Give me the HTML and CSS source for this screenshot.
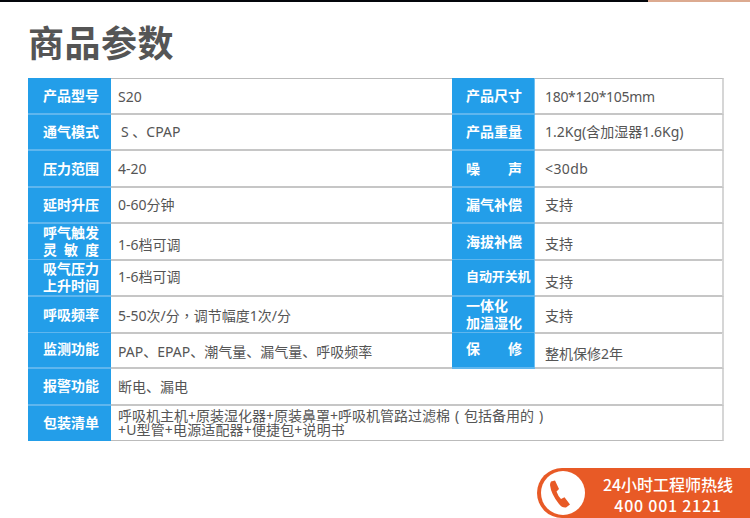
FILE: index.html
```html
<!DOCTYPE html>
<html lang="zh-CN">
<head>
<meta charset="utf-8">
<title>商品参数</title>
<link rel="stylesheet" href="styles.css">
</head>
<body>
<div class="topbar"><div class="topbar-dark"></div><div class="topbar-peach"></div></div>
<main class="page">
  <h1 class="title">商品参数</h1>
  <section class="specs">
    <div class="row h37 first">
      <div class="label">产品型号</div><div class="value">S20</div>
      <div class="label right">产品尺寸</div><div class="value right tight">180*120*105mm</div>
    </div>
    <div class="row h36">
      <div class="label up1">通气模式</div><div class="value indent up1">S 、CPAP</div>
      <div class="label right up1">产品重量</div><div class="value right up1">1.2Kg(含加湿器1.6Kg)</div>
    </div>
    <div class="row h37">
      <div class="label">压力范围</div><div class="value">4-20</div>
      <div class="label right"><span class="just">噪 声</span></div><div class="value right wide-text">&lt;30db</div>
    </div>
    <div class="row h36">
      <div class="label up1">延时升压</div><div class="value up1">0-60分钟</div>
      <div class="label right up1">漏气补偿</div><div class="value right up1">支持</div>
    </div>
    <div class="row h36">
      <div class="label two"><span>呼气触发</span><span class="just">灵 敏 度</span></div><div class="value low3">1-6档可调</div>
      <div class="label right">海拔补偿</div><div class="value right low2">支持</div>
    </div>
    <div class="row h37">
      <div class="label two"><span>吸气压力</span><span>上升时间</span></div><div class="value up1">1-6档可调</div>
      <div class="label right small">自动开关机</div><div class="value right low5">支持</div>
    </div>
    <div class="row h36">
      <div class="label">呼吸频率</div><div class="value low1">5-50次/分<span class="tc" lang="zh-TW">，</span>调节幅度1次/分</div>
      <div class="label right two"><span>一体化</span><span>加温湿化</span></div><div class="value right low1">支持</div>
    </div>
    <div class="row h36">
      <div class="label up2">监测功能</div><div class="value low2">PAP、EPAP、潮气量、漏气量、呼吸频率</div>
      <div class="label right up2"><span class="just">保 修</span></div><div class="value right low4">整机保修2年</div>
    </div>
    <div class="row wide h37">
      <div class="label up1">报警功能</div><div class="value">断电、漏电</div>
    </div>
    <div class="row wide h35 last">
      <div class="label up1">包装清单</div>
      <div class="value multi"><span>呼吸机主机+原装湿化器+原装鼻罩+呼吸机管路过滤棉<span class="paren">(</span>包括备用的<span class="paren">)</span></span><span class="spaced">+U型管+电源适配器+便捷包+说明书</span></div>
    </div>
  </section>
  <aside class="hotline">
    <div class="hotline-icon">
      <svg viewBox="0 0 44 44" width="44" height="44" aria-hidden="true"><path d="M10 10.500L14 9.500L18 18L15.500 20.500Q17 25 20 28L23.500 26.300L29 33.500L25 36.500Q21 37 18 33Q10 23 9 14Q9 12 10 10.500Z" fill="#e85a26"/></svg>
    </div>
    <div class="hotline-text"><div>24小时工程师热线</div><div class="phone">400 001 2121</div></div>
  </aside>
</main>
</body>
</html>
```

FILE: styles.css
```css
* { box-sizing: border-box; }
html, body { margin: 0; padding: 0; }
body {
  width: 750px;
  height: 518px;
  overflow: hidden;
  background: #fff;
  font-family: "Noto Sans", "Noto Sans CJK SC", sans-serif;
  color: #555;
}
.topbar { display: flex; height: 2px; }
.topbar-dark { width: 648px; background: #04070c; }
.topbar-peach { flex: 1; background: #dcaa90; }
.page { display: flex; flex-direction: column; }
.title {
  margin: 19px 0 0 28px;
  height: 57px;
  font-size: 36px;
  letter-spacing: .5px;
  line-height: 40px;
  font-weight: 700;
  color: #555;
  font-family: "Noto Sans CJK SC", sans-serif;
}
.specs {
  margin-left: 28px;
  width: 696px;
  display: flex;
  flex-direction: column;
}
.row {
  display: grid;
  grid-template-columns: 83px 341px 83px 189px;
}
.row.wide { grid-template-columns: 83px 613px; }
.h35 { height: 35px; }
.h36 { height: 36px; }
.h37 { height: 37px; }
.label {
  background: #239ee9;
  color: #fff;
  font-size: 14px;
  font-weight: 700;
  font-family: "Noto Sans CJK SC", sans-serif;
  line-height: 17px;
  padding: 0 0 0 15px;
  display: flex;
  align-items: center;
  border-bottom: 2px solid #5fb6ee;
}
.label.right {
  padding-left: 14px;
  border-right: 1px solid #6fc0f2;
}
.label.small { font-size: 13px; letter-spacing: -.1px; padding-bottom: 5px; }
.label.two { flex-direction: column; align-items: flex-start; justify-content: center; padding-bottom: 1px; }
.just { display: block; width: 56px; text-align: justify; text-align-last: justify; }
.value {
  font-size: 14px;
  line-height: 17px;
  padding: 0 0 0 7px;
  display: flex;
  align-items: center;
  border-bottom: 2px solid #c6c6c6;
  color: #555;
  white-space: nowrap;
}
.value.right { padding-left: 10px; border-right: 2px solid #d6d6d6; }
.wide .value { border-right: 2px solid #d6d6d6; }
.first .value { border-top: 1px solid #bbb; }
.last .label { border-bottom: 0; }
.last .value { border-bottom: 1px solid #bbb; }
.value.indent { padding-left: 10px; }
.tight { letter-spacing: -.3px; }
.wide-text { letter-spacing: .4px; }
.up1 { padding-bottom: 2px; }
.up2 { padding-bottom: 3px; }
.low1 { padding-top: 1px; }
.low2 { padding-top: 2px; }
.low3 { padding-top: 5px; }
.low4 { padding-top: 6px; }
.low5 { padding-top: 8px; }
.value.low2 { padding-top: 3px; }
.multi {
  flex-direction: column;
  align-items: flex-start;
  justify-content: center;
  line-height: 14px;
}
.tc { font-family: "Noto Sans CJK TC", sans-serif; }
.paren { display: inline-block; width: 14px; text-align: center; }
.spaced { letter-spacing: .15px; }
.hotline {
  margin: 27px 0 0 537px;
  width: 213px;
  height: 50px;
  background: #e85a26;
  border-radius: 25px 0 0 25px;
  display: flex;
  align-items: center;
  color: #fff;
  font-family: "Noto Sans CJK SC", sans-serif;
  font-weight: 500;
}
.hotline-icon {
  width: 44px;
  height: 44px;
  margin-left: 4px;
  border-radius: 50%;
  background: #fff;
  display: flex;
  align-items: center;
  justify-content: center;
}
.hotline-text {
  margin-left: 17px;
  padding-top: 4px;
  width: 132px;
  text-align: center;
  font-size: 16px;
  line-height: 21px;
  white-space: nowrap;
}
.phone { font-size: 16px; letter-spacing: .75px; }
```
